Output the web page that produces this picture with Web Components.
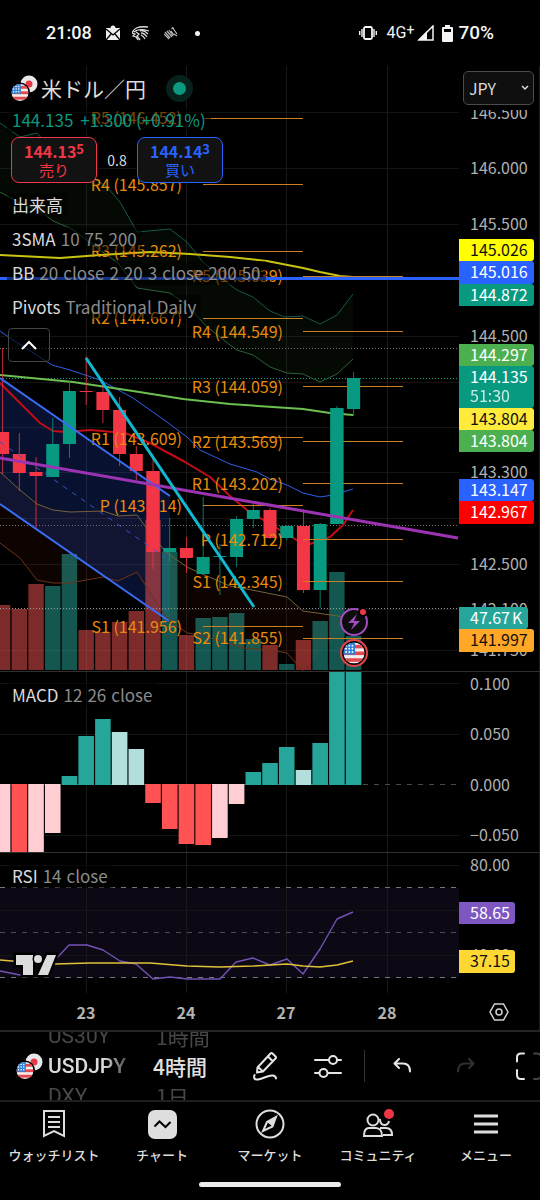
<!DOCTYPE html>
<html lang="ja">
<head>
<meta charset="utf-8">
<meta name="viewport" content="width=device-width, initial-scale=1">
<title>USDJPY チャート</title>
<style>
html, body { margin: 0; background: #000; }
body { font-family: "Noto Sans CJK JP", sans-serif; color: #dbdbdb; overflow-x: hidden; }
</style>
</head>
<body>
<phone-screen></phone-screen>
<script>
const define = (name, html, setup) => {
  const tpl = document.createElement('template');
  tpl.innerHTML = html;
  customElements.define(name, class extends HTMLElement {
    constructor() {
      super();
      this.attachShadow({ mode: 'open' }).append(tpl.content.cloneNode(true));
      if (setup) setup.call(this, this.shadowRoot);
    }
  });
};

/* ---------- chart data and helpers ---------- */
const STEP = 16.714, FIRST = 2.6;
const cx = i => FIRST + STEP * i;
const UP = '#089981', DOWN = '#f23645';
const poly = (pts, color, w = 1, extra = '') =>
  `<polyline points="${pts}" fill="none" stroke="${color}" stroke-width="${w}" stroke-linejoin="round" ${extra}/>`;
const hrow = (y, color, dash = '') =>
  `<line x1="0" x2="100%" y1="${y}.5" y2="${y}.5" stroke="${color}" ${dash ? `stroke-dasharray="${dash}"` : ''}/>`;
const grid = (rows, top, bottom) =>
  rows.map(y => hrow(y, '#141414')).join('') +
  [86, 186, 286, 387].map(x => `<rect x="${x}" y="${top}" width="1" height="${bottom - top}" fill="#191919"/>`).join('');
const label = (x, y, text, fill, anchor = 'start', extra = '') =>
  `<text x="${x}" y="${y + 6}" fill="${fill}" text-anchor="${anchor}" ${extra}>${text}</text>`;
const tag = (y, h, w, bg, fg, text, sub) =>
  `<path d="M0 ${y}H${w - 3}q3 0 3 3v${h - 6}q0 3 -3 3H0z" fill="${bg}"/>` +
  label(11, y + 11, text, fg) + (sub ? label(11, y + 30, sub, fg, 'start', 'opacity=".8"') : '');

const flag = (x, y, r, id) => `
  <clipPath id="${id}"><circle cx="${x}" cy="${y}" r="${r}"/></clipPath>
  <g clip-path="url(#${id})">
    <rect x="${x - r}" y="${y - r}" width="${2 * r}" height="${2 * r}" fill="#f0f0f0"/>
    ${[-0.62, 0.02, 0.66].map(k => `<rect x="${x - r}" y="${y + r * k - r * .16}" width="${2 * r}" height="${r * .34}" fill="#e5484d"/>`).join('')}
    <rect x="${x - r}" y="${y - r}" width="${r * 1.1}" height="${r * 1.15}" fill="#2f80d8"/>
    ${[-.75, -.45, -.15].map(a => [-.7, -.4, -.1].map(b => `<circle cx="${x + r * a}" cy="${y + r * b}" r="${r * .09}" fill="#fff"/>`).join('')).join('')}
  </g>`;

// [body top, body bottom, wick top, wick bottom, up?]
const candles = [
  [432,454,348,474,0],[454,473,433,491,0],[472,476,457,528,0],[444,477,418,477,1],[391,444,381,458,1],
  [391,392,356,405,0],[392,410,385,423,0],[410,454,397,466,0],[454,471,446,480,0],[471,552,458,569,0],
  [548,552,518,562,1],[548,558,537,573,0],[557,574,497,574,1],[556,557,544,595,1],[519,557,516,567,1],
  [510,519,504,528,1],[510,538,508,539,0],[526,538,525,540,1],[526,590,509,593,0],[524,590,523,608,1],
  [408,524,406,524,1],[378,409,372,416,1]];
const volume = [605,609,584,586,554,630,632,622,611,520,552,635,618,617,613,639,645,664,640,621,572,636];
const volUp = [0,0,0,1,1,0,0,0,0,0,1,0,1,1,1,1,0,1,0,1,1,1];
const macd = [[860,'#ffcdd2'],[860,'#ff5252'],[860,'#ffcdd2'],[833,'#ffcdd2'],[776,'#26a69a'],[736,'#26a69a'],
  [719,'#26a69a'],[732,'#b2dfdb'],[749,'#b2dfdb'],[803,'#ff5252'],[829,'#ff5252'],[844,'#ff5252'],[845,'#ff5252'],
  [838,'#ffcdd2'],[804,'#ffcdd2'],[772,'#26a69a'],[763,'#26a69a'],[747,'#26a69a'],[770,'#b2dfdb'],[743,'#26a69a'],
  [660,'#26a69a'],[660,'#26a69a']];

const bandTopA = '0,123 20,137 37,133 52,150 107,187 120,202 137,232 170,229 187,242 203,262 230,285 237,290 253,297 270,311 285,317 303,316 320,324 337,315 353,294';
const bandTopB = '0,192 20,203 43,213 53,221 72,229 100,250 118,263 137,288 170,293 187,305 207,327 230,345 237,350 253,355 270,367 287,373 303,374 320,382 337,374 353,359';
const bandLowA = '0,472 20,490 37,504 53,510 70,512 103,511 118,516 137,515 153,537 167,553 187,567 200,573 230,586 247,589 267,593 287,597 303,611 338,616 353,618';
const bandLowB = '0,543 20,558 37,580 53,583 70,583 103,577 118,581 137,572 153,597 167,618 187,633 200,635 243,648 270,650 287,653 303,671';
const rev = s => s.split(' ').reverse().join(' ');

const pivotsA = [['R5 (146.452)',118],['R4 (145.857)',185],['R3 (145.262)',251],['R2 (144.667)',318],['R1 (143.609)',439],['P (143.114)',506],['S1 (141.956)',627]];
const linesA = [118,184,251,318,437,505,626];
const pivotsB = [['R5 (145.039)',276],['R4 (144.549)',332],['R3 (144.059)',387],['R2 (143.569)',442],['R1 (143.202)',484],['P (142.712)',540],['S1 (142.345)',582],['S2 (141.855)',638]];
const linesB = [276,331,386,441,483,539,581,638];
const rowLine = (x, y) => `<rect x="${x}" y="${y}" width="100" height="1" fill="#c98022"/>`;

const priceSvg = () => `
  ${grid([112,168,224,336,382,427,472,518,564,609,650], 66, 672)}
  <polygon points="${bandTopA} ${rev(bandTopB)}" fill="#4caf50" fill-opacity=".05"/>
  <polygon points="${bandLowA} ${rev(bandLowB)}" fill="#ff5722" fill-opacity=".05"/>
  <polygon points="0,378 170,496 170,621 0,504" fill="#2962ff" fill-opacity=".19"/>
  ${volume.map((t, i) => `<rect x="${cx(i) - 7.7}" y="${t}" width="15.4" height="${670 - t}" fill="${volUp[i] ? '#26a69a' : '#ef5350'}" fill-opacity=".52"/>`).join('')}
  ${hrow(348, '#6c6c6c', '1 2')}${hrow(378, UP, '1 2')}${hrow(525, '#6c6c6c', '1 2')}${hrow(608, '#9a9a9a', '1 2')}
  ${poly(bandTopA, '#14594d')}${poly(bandTopB, '#2e6137')}
  ${poly(bandLowA, '#75613a')}${poly(bandLowB, '#6f3218')}
  ${poly('0,331 10,338 52,365 70,370 100,380 133,398 167,422 187,437 200,450 230,464 257,472 270,479 287,485 303,493 320,497 333,495 353,489', '#2a5fe8')}
  ${poly('0,383 20,403 40,423 53,431 66,432 90,430 125,433 150,443 185,462 210,477 230,496 247,510 280,530 300,542 310,544 330,537 343,525 353,510', '#c20d16', 2)}
  ${poly('0,375 73,382 133,391 183,399 230,404 303,409 330,413 353,415', '#6cc04f', 2)}
  ${poly('0,255 60,258 100,255 150,252 190,254 230,257 267,261 303,268 320,272 340,276 353,277', '#c9c412', 2)}
  ${candles.map(([t, b, wt, wb, up], i) => `<rect x="${cx(i) - .5}" y="${wt}" width="1" height="${wb - wt}" fill="${up ? UP : DOWN}" opacity=".8"/><rect x="${cx(i) - 6.5}" y="${t}" width="13" height="${b - t}" fill="${up ? UP : DOWN}"/>`).join('')}
  ${linesA.map(y => rowLine(203, y)).join('')}${linesB.map(y => rowLine(303, y)).join('')}
  <g>${pivotsA.map(([t, y]) => label(182, y, t, '#e88a0c', 'end')).join('')}${pivotsB.map(([t, y]) => label(283, y, t, '#e88a0c', 'end')).join('')}</g>
  <rect x="${cx(9) - 6.5}" y="471" width="13" height="81" fill="${DOWN}"/>
  <rect x="${cx(20) - 6.5}" y="408" width="13" height="116" fill="${UP}"/>
  <rect x="${cx(21) - 6.5}" y="378" width="13" height="31" fill="${UP}"/>
  <line x1="0" y1="378" x2="170" y2="496" stroke="#3b6cf6" stroke-width="2"/>
  <line x1="0" y1="504" x2="169" y2="621" stroke="#3b6cf6" stroke-width="2"/>
  <line x1="0" y1="442" x2="166" y2="558" stroke="#3357c4" stroke-dasharray="5 6"/>
  <line x1="0" y1="458" x2="458" y2="538" stroke="#9c33b3" stroke-width="3"/>
  <line x1="86" y1="358" x2="254" y2="607" stroke="#12b8d0" stroke-width="3"/>
  <rect x="0" y="277" width="100%" height="3" fill="#2962ff"/>
  <circle cx="354" cy="622" r="13" fill="#0c0c0c" stroke="#a34bc0" stroke-width="2"/>
  <path d="M357 614l-9 9h6l-3 7 9-9h-6z" fill="#a34bc0"/>
  <circle cx="363" cy="612" r="5" fill="#000"/><circle cx="363" cy="612" r="3" fill="#f23645"/>
  <circle cx="354" cy="653" r="13" fill="#0c0c0c" stroke="#e2434c" stroke-width="2"/>
  ${flag(354, 653, 10.5, 'us-event')}`;

const plotCss = `
  :host { display: grid; grid-template-columns: minmax(0, 1fr) 81px; border-bottom: 1px solid #303030; }
  :host(.last) { border-bottom: 0; }
  svg { display: block; width: 100%; overflow: hidden; font-family: inherit; font-size: 16px; grid-row: 1; }
  .plot { grid-column: 1; } .axis { grid-column: 2; box-sizing: border-box; border-right: 1px solid #1c1c1c; }
  slot { display: block; }
  .over { grid-row: 1; grid-column: 1; z-index: 1; min-width: 0; }
  .side { grid-row: 1; grid-column: 2; z-index: 1; }`;
const pane = (name, top, height, plot, axis) => define(name, `<style>${plotCss}</style>
  <svg class="plot" height="${height}" aria-hidden="true"><g transform="translate(0 ${-top})">${plot}</g></svg>
  <svg class="axis" height="${height}"><g transform="translate(0 ${-top})">${axis}</g></svg>
  <div class="over"><slot></slot></div><div class="side"><slot name="side"></slot></div>`);

const AX = '#b0b0b0';
pane('price-pane', 66, 605, priceSvg(),
  [[113,'146.500'],[168,'146.000'],[224,'145.500'],[336,'144.500'],[472,'143.300'],[564,'142.500'],[609,'142.100'],[650,'141.750']].map(([y, t]) => label(11, y, t, AX)).join('') +
  '<rect x="0" y="66" width="80" height="44" fill="#000"/>' +
  tag(239, 22, 75, '#ffff00', '#111', '145.026') + tag(261, 23, 75, '#2962ff', '#fff', '145.016') + tag(284, 22, 75, '#089981', '#fff', '144.872') +
  tag(344, 22, 75, '#4caf50', '#fff', '144.297') + tag(366, 42, 75, '#089981', '#fff', '144.135', '51:30') +
  tag(408, 22, 75, '#ffeb3b', '#111', '143.804') + tag(430, 22, 75, '#4caf50', '#fff', '143.804') +
  tag(479, 22, 75, '#2962ff', '#fff', '143.147') + tag(501, 23, 75, '#ff0000', '#fff', '142.967') +
  tag(607, 22, 69, '#26a69a', '#fff', '47.67<tspan dx="2">K</tspan>') + tag(629, 23, 75, '#ffa726', '#111', '141.997'));

pane('macd-pane', 672, 180,
  grid([683, 734, 835], 672, 852) + hrow(784, '#4a4a4a', '5 6') +
  macd.map(([y, c], i) => { const t = Math.min(y, 784), b = Math.max(y, 785);
    return `<rect x="${cx(i) - 7.8}" y="${t}" width="15.6" height="${b - t}" fill="${c}"/>`; }).join(''),
  [[684,'0.100'],[734,'0.050'],[785,'0.000'],[835,'−0.050']].map(([y, t]) => label(11, y, t, AX)).join(''));

pane('rsi-pane', 853, 140,
  '<rect x="0" y="888" width="100%" height="90" fill="#7e57c2" fill-opacity=".1"/>' + grid([865, 910, 955], 853, 993) +
  hrow(887, '#757575', '5 6') + hrow(932, '#4c4c55', '5 6') + hrow(977, '#757575', '5 6') +
  poly('0,971 20,975 40,975 55,960 69,945 87,945 103,950 120,961 136,964 153,979 170,977 187,979 220,979 236,962 253,958 270,965 287,959 303,974 320,949 337,919 353,912', '#7351b5', 1.4) +
  poly('0,960 12,961 55,964 90,963 150,963 187,966 220,967 253,966 287,964 303,966 320,967 337,965 353,961', '#e0c23a', 1.4) +
  '<path d="M16 955h17v20h-10v-10h-7zM47 955h9l-8 20h-10z" fill="#dcdcdc" stroke="#000" stroke-width="5" paint-order="stroke"/><circle cx="38" cy="959" r="4" fill="#dcdcdc" stroke="#000" stroke-width="3" paint-order="stroke"/>',
  label(11, 865, '80.00', AX) + label(11, 955, '40.00', AX) + tag(902, 22, 56, '#7e57c2', '#fff', '58.65') + tag(950, 23, 56, '#fdd835', '#111', '37.15'));

define('time-axis', `<style>
  :host { display: grid; grid-template-columns: minmax(0, 1fr) 81px; border-bottom: 2px solid #242424; }
  svg { display: block; } .days { width: 100%; font-size: 16px; font-weight: 700; }
  .gear { display: grid; place-items: center; border: 0; border-right: 1px solid #1c1c1c; background: none; padding: 0; }
  </style>
  <svg class="days" height="37">${[[86,23],[186,24],[286,27],[387,28]].map(([x, t]) => label(x, 20, t, '#b4b4b4', 'middle')).join('')}</svg>
  <button class="gear" aria-label="設定"><svg width="20" height="20" viewBox="0 0 20 20" fill="none" stroke="#d0d0d0" stroke-width="1.5"><path d="M5.5 2h9L19 10l-4.500 8h-9L1 10z"/><circle cx="10" cy="10" r="3"/></svg></button>`);

/* ---------- header over the price chart ---------- */
define('flag-pair', `<style>:host { display: block; flex: none; width: 27px; height: 27px; } svg { display: block; }</style>
  <svg width="27" height="27" viewBox="0 0 27 27"><circle cx="18" cy="9" r="8.500" fill="#e8e8ea"/><circle cx="18" cy="9" r="3.500" fill="#e5394a"/>
  <circle cx="9" cy="17.500" r="10" fill="#000"/>${flag(9, 17.5, 8.5, 'us')}</svg>`);

define('quote-button', `<style>
  :host { display: block; --c: #f23645; } :host([side=buy]) { --c: #2962ff; }
  button { box-sizing: border-box; width: 86px; height: 46px; padding: 0; border: 1px solid var(--c); border-radius: 8px; background: #121212;
    color: var(--c); font: 400 15px/18px "Noto Sans CJK JP", sans-serif; display: flex; flex-direction: column; align-items: center; justify-content: center; }
  .p { display: flex; font-weight: 700; font-size: 16px; line-height: 20px; } .s { font-size: 13px; line-height: 15px; }
  </style><button><span class="p"><slot></slot><span class="s"><slot name="pip"></slot></span></span><slot name="name"></slot></button>`);

define('study-legend', `<style>
  :host { display: block; font-size: 17px; line-height: 24px; color: #dbdbdb; white-space: nowrap; }
  div { display: flex; gap: 5px; width: max-content; background: rgba(0, 0, 0, .5); padding: 0 5px; margin-left: 7px; }
  span { color: #8c8c8c; }
  </style><div><slot></slot></div>`, function (root) {
  // one span for each input value, so that the gap between values is the row's own
  const values = (this.getAttribute('values') || '').split(' ').filter(Boolean);
  root.querySelector('div').append(...values.map(v => Object.assign(document.createElement('span'), { textContent: v })));
});

define('currency-select', `<style>
  :host { display: grid; width: 71px; margin: 5px 0 0 4px; }
  label { position: absolute; width: 1px; height: 1px; overflow: hidden; clip-path: inset(50%); }
  select { grid-area: 1 / 1; appearance: none; box-sizing: border-box; width: 71px; height: 34px; padding: 0 5px; border: 1px solid #4a4a4a;
    border-radius: 5px; background: #0f0f0f; color: #dbdbdb; font: 400 16px "Noto Sans CJK JP", sans-serif; }
  svg { grid-area: 1 / 1; place-self: center end; margin-right: 5px; pointer-events: none; }
  </style><select id="c" aria-label="通貨"><option>JPY</option></select>
  <svg width="8" height="6" viewBox="0 0 8 6" fill="none" stroke="#dbdbdb" stroke-width="1.5"><path d="M1 1l3 3 3-3"/></svg>`);

define('symbol-header', `<style>
  :host { display: block; padding-top: 7px; }
  .title { display: flex; align-items: center; height: 30px; padding-left: 11px; gap: 3px; font-size: 21px; line-height: 30px; }
  h1 { margin: 0; font: inherit; }
  .live { width: 13px; height: 13px; border-radius: 50%; background: #0b9981; border: 7px solid #07211c; margin-left: 17px; }
  .quote { width: max-content; margin: 4px 0 5px 7px; padding: 0 5px; background: rgba(0, 0, 0, .5); display: flex; gap: 7px; font-size: 17px; line-height: 25px; color: #0b9981; }
  .trade { display: flex; align-items: center; padding-left: 11px; font-size: 14px; } .spread { width: 40px; text-align: center; }
  .studies { display: grid; gap: 10px; margin-top: 10px; }
  .fold { box-sizing: border-box; display: grid; place-items: center; width: 42px; height: 34px; margin: 9px 0 0 8px; padding: 0; border: 1px solid #454545; border-radius: 4px; background: rgba(0, 0, 0, .6); }
  </style>
  <div class="title"><flag-pair></flag-pair><h1>米ドル／円</h1><span class="live"></span></div>
  <div class="quote"><span>144.135</span><span>+1.300 (+0.91%)</span></div>
  <div class="trade"><quote-button>144.13<span slot="pip">5</span><span slot="name">売り</span></quote-button><span class="spread">0.8</span>
  <quote-button side="buy">144.14<span slot="pip">3</span><span slot="name">買い</span></quote-button></div>
  <div class="studies">
    <study-legend>出来高</study-legend>
    <study-legend values="10 75 200">3SMA</study-legend>
    <study-legend values="20 close 2 20 3 close 200 50">BB</study-legend>
    <study-legend values="Traditional Daily">Pivots</study-legend>
  </div>
  <button class="fold" aria-label="折りたたむ"><svg width="18" height="10" viewBox="0 0 18 10" fill="none" stroke="#fff" stroke-width="2"><path d="M2 9l7-7 7 7"/></svg></button>`);

/* ---------- status bar ---------- */
define('status-bar', `<style>
  :host { display: flex; align-items: center; height: 66px; padding: 0 46px; color: #f4f4f4; font: 500 18px/24px Roboto, sans-serif; }
  svg { display: block; flex: none; } .grow { flex: 1; }
  .net { font-weight: 400; font-size: 16px; margin: 0 3px 0 10px; display: flex; } .net small { font-size: 14px; line-height: 18px; }
  .pct { font-size: 19px; margin-left: 5px; }
  .a { margin-left: 14px; } .b { margin-left: 8px; }
  .dot { width: 5px; height: 5px; border-radius: 50%; background: #f4f4f4; margin-left: 17px; }
  </style>
  <span>21:08</span>
  <svg class="a" width="14" height="16" viewBox="0 0 14 16"><path d="M0 3h14v12H0z" fill="#eee"/><circle cx="7" cy="3" r="2.500" fill="#eee"/><path d="M0 4l7 6 7-6M0 15l5-6M14 15L9 9" fill="none" stroke="#000" stroke-width="1.300"/></svg>
  <svg style="margin-left:12px" width="18" height="16" viewBox="0 0 18 16" fill="none" stroke="#ddd" stroke-width="1.300"><path d="M0 8C2 3 6 1 16 2M2 7c3-3 8-3 15-1M8 6c3-1 5 0 8 3M9 8c2 0 4 1 6 4M9 10c2 1 3 2 4 4M0 8l3 1-2 2 3 1 2 3M4 7l3 2-2 2 3 4"/></svg>
  <svg class="a" width="14" height="14" viewBox="0 0 14 14" fill="none" stroke="#bbb" stroke-width="1.200"><path d="M0 8l5 5M1 6l5 6M3 5l5 6M5 4l4 6M7 5l3 4M8 1l5 7M7 3l3-1M10 8l3 2"/></svg>
  <span class="dot"></span><span class="grow"></span>
  <svg width="18" height="14" viewBox="0 0 18 14" fill="none" stroke="#f4f4f4"><rect x="5" y="1" width="8" height="12" rx="1.500" stroke-width="1.800"/><path d="M.7 5v4M3 3v8M15 3v8M17.300 5v4" stroke-width="1.400"/></svg>
  <span class="net">4G<small>+</small></span>
  <svg width="17" height="16" viewBox="0 0 17 16"><path d="M16 1v14H2z" fill="none" stroke="#f4f4f4" stroke-width="1.500"/><path d="M10 6v9H1z" fill="#f4f4f4"/></svg>
  <svg class="b" width="11" height="17" viewBox="0 0 11 17"><path d="M3 0h5v2h2q1 0 1 1v13q0 1-1 1H1q-1 0-1-1V3q0-1 1-1h2z" fill="#f4f4f4"/><path d="M2 4h7v3H2z" fill="#000"/></svg>
  <span class="pct">70%</span>`);

/* ---------- tool bar ---------- */
define('wheel-picker', `<style>
  :host { display: flex; flex-direction: column; justify-content: center; flex: none; height: 68px; overflow: hidden; font-size: 21px; line-height: 30px; }
  ::slotted(*) { height: 30px; flex: none; white-space: nowrap; } ::slotted(.dim) { opacity: .32; }
  </style><slot></slot>`);

define('tool-bar', `<style>
  :host { display: flex; align-items: center; height: 68px; overflow: hidden; border-bottom: 2px solid #1e1e1e; }
  flag-pair { margin: 0 5px 0 16px; }
  .sym { width: 105px; font-family: Roboto, sans-serif; font-size: 21px; font-weight: 500; -webkit-mask: linear-gradient(90deg, #000 55px, rgba(0,0,0,.3) 80px); mask: linear-gradient(90deg, #000 55px, rgba(0,0,0,.3) 80px); }
  .sym .dim { font-weight: 400; }
  .int { width: 82px; } .int .dim { padding-left: 3px; } .int .now { font-weight: 500; color: #e0e0e0; }
  button { flex: none; width: 64px; height: 48px; padding: 0; border: 0; background: none; display: grid; place-items: center; color: #e6e6e6; }
  .n { width: 62px; } button[disabled] { color: #303030; }
  i { flex: none; width: 1px; height: 32px; background: #333; margin: 0 5px; }
  svg { display: block; fill: none; stroke: currentColor; stroke-width: 2; stroke-linecap: round; stroke-linejoin: round; }
  </style>
  <flag-pair></flag-pair>
  <wheel-picker class="sym"><span class="dim">US30Y</span><span>USDJPY</span><span class="dim">DXY</span></wheel-picker>
  <wheel-picker class="int"><span class="dim">1時間</span><span class="now">4時間</span><span class="dim">1日</span></wheel-picker>
  <button class="n" aria-label="描画"><svg width="26" height="30" viewBox="0 0 26 30"><path d="M4.500 16.500L17.500 2.500q1-1 2 0l3 3q1 1 0 2L10 20.500l-6 1zM15 5.500l4.500 4.500M5 16l5 4.500M1.500 24c-1 3 0 5 3.500 4.500 6-1 11-5 15-4 2 .5 3 1.500 3 3"/></svg></button>
  <button class="n" aria-label="インジケーター"><svg width="28" height="24" viewBox="0 0 28 24"><path d="M1 6h14M23 6h4M1 19h4M14 19h13"/><circle cx="19" cy="6" r="4"/><circle cx="9.500" cy="19" r="4"/></svg></button>
  <i></i>
  <button aria-label="元に戻す"><svg width="18" height="16" viewBox="0 0 18 16"><path d="M6 1L1.500 5.500 6 10M2 5.500h8q7 0 7 8"/></svg></button>
  <button disabled aria-label="やり直す"><svg width="18" height="16" viewBox="0 0 18 16"><path d="M12 1l4.500 4.500L12 10M16 5.500H8q-7 0-7 8"/></svg></button>
  <button aria-label="全画面"><svg width="30" height="28" viewBox="0 0 30 28"><path d="M9 1.500H6q-4 0-4 4v4M2 18v5q0 4 4 4h3"/><path d="M19 1.500h3q4 0 4 4M19 27h3q4 0 4-4" stroke="#444"/></svg></button>`);

/* ---------- bottom navigation ---------- */
define('nav-item', `<style>
  :host { display: block; flex: 1 1 0; min-width: 0; }
  a { display: flex; flex-direction: column; align-items: center; gap: 4px; padding-top: 5px; color: #dedede; text-decoration: none; font-size: 13px; font-weight: 500; line-height: 20px; white-space: nowrap; }
  span { display: grid; place-items: center; height: 34px; }
  </style><a href="#"><span><slot name="icon"></slot></span><slot></slot></a>`);

define('nav-bar', `<style>
  :host { display: block; } nav { display: flex; }
  svg { display: block; fill: none; stroke: #dedede; stroke-width: 2; }
  .menu { stroke-width: 3; }
  .home { width: 142px; height: 5px; border-radius: 3px; background: #ececec; margin: 17px auto 0; }
  </style>
  <nav>
  <nav-item><svg slot="icon" width="22" height="28" viewBox="0 0 22 28"><path d="M1 1h20v25l-10-5-10 5zM5 7h12M5 12h12M5 17h12"/></svg>ウォッチリスト</nav-item>
  <nav-item><svg slot="icon" width="29" height="29" viewBox="0 0 29 29"><rect width="29" height="29" rx="7" fill="#dedede" stroke="none"/><path d="M6.500 16.500l5-5 6 5.500 5-5" stroke="#000"/></svg>チャート</nav-item>
  <nav-item><svg slot="icon" width="30" height="30" viewBox="0 0 30 30"><circle cx="15" cy="15" r="13.500"/><path d="M21 8l-3.500 9.500L8 22l4-9z" /><path d="M21 8l-3.500 9.500L12 13z" fill="#dedede" stroke="none"/></svg>マーケット</nav-item>
  <nav-item><svg slot="icon" width="32" height="30" viewBox="0 0 32 30"><circle cx="11" cy="11" r="5.500"/><path d="M7 19h7c3.500 0 6 3 6 8H2c0-5 1.500-8 5-8zM18 10c0 4 1 6 4.500 6 3 0 4-1.500 4.500-4M18 19h6c4 0 6 2.500 6 7h-9"/><circle cx="27" cy="5" r="5" fill="#f23645" stroke="none"/></svg>コミュニティ</nav-item>
  <nav-item><svg slot="icon" class="menu" width="26" height="22" viewBox="0 0 26 22"><path d="M1 3h24M1 11h24M1 19h24"/></svg>メニュー</nav-item>
  </nav><div class="home"></div>`);

define('phone-screen', `<style>
  :host { display: block; min-height: 100vh; background: #000; }
  .sub { margin-top: 11px; }
  </style>
  <status-bar></status-bar>
  <main>
    <price-pane><symbol-header></symbol-header><currency-select slot="side"></currency-select></price-pane>
    <macd-pane><study-legend class="sub" values="12 26 close">MACD</study-legend></macd-pane>
    <rsi-pane class="last"><study-legend class="sub" values="14 close">RSI</study-legend></rsi-pane>
    <time-axis></time-axis>
  </main>
  <tool-bar></tool-bar>
  <nav-bar></nav-bar>`);
</script>
</body>
</html>
